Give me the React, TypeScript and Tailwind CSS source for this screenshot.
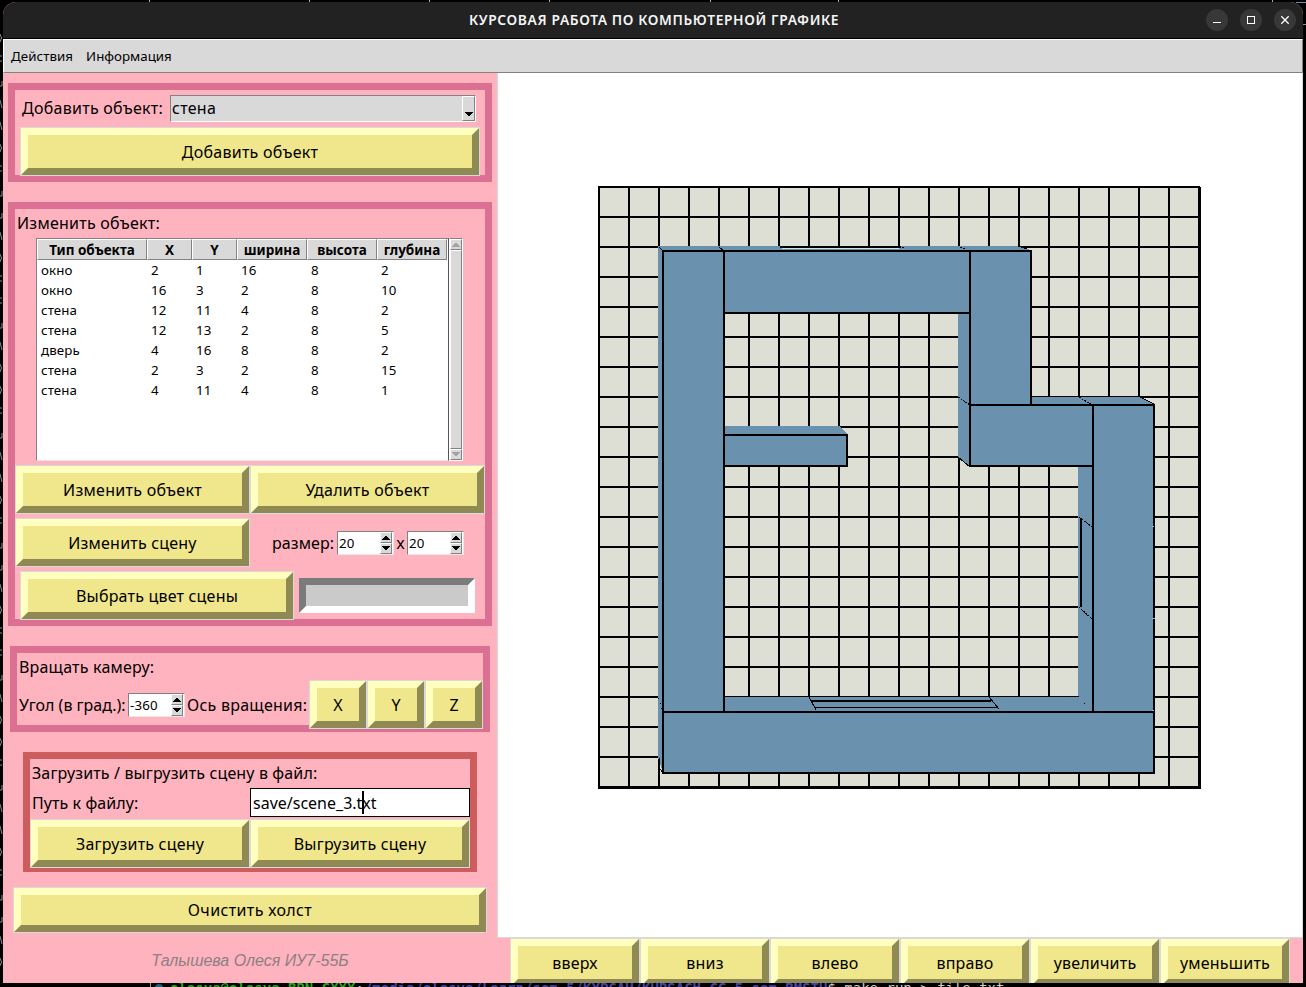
import React from "react";

const rows = [
  ["окно", "2", "1", "16", "8", "2"],
  ["окно", "16", "3", "2", "8", "10"],
  ["стена", "12", "11", "4", "8", "2"],
  ["стена", "12", "13", "2", "8", "5"],
  ["дверь", "4", "16", "8", "8", "2"],
  ["стена", "2", "3", "2", "8", "15"],
  ["стена", "4", "11", "4", "8", "1"],
];
const headers = ["Тип объекта", "X", "Y", "ширина", "высота", "глубина"];
const columns = "grid grid-cols-[110px_45px_45px_70px_70px_70px]";

function TkButton({ children, className }: { children: React.ReactNode; className: string }) {
  return (
    <button className={`shrink-0 bg-[#d9d9d9] p-px text-[16px] ${className}`}>
      <span className="flex h-full w-full items-center justify-center whitespace-nowrap border-[7px] border-t-[#ffffc0] border-l-[#ffffc0] border-r-[#8f8a54] border-b-[#8f8a54] bg-[#f0e68c]">
        {children}
      </span>
    </button>
  );
}

function Arrow({ up, muted }: { up?: boolean; muted?: boolean }) {
  return (
    <svg width="8" height="5" viewBox="0 0 8 5" shapeRendering="crispEdges">
      <path d={up ? "M4 0L8 5H0Z" : "M0 0H8L4 5Z"} fill={muted ? "#a3a3a3" : "#000"} />
    </svg>
  );
}

const raised = "border border-t-white border-l-white border-r-[#828282] border-b-[#828282] bg-[#d9d9d9]";

function Spin({ value }: { value: string }) {
  return (
    <div className="flex h-[24px] w-[57px] shrink-0 border border-t-[#828282] border-l-[#828282] border-r-[#e8e8e8] border-b-[#e8e8e8] bg-white">
      <span className="flex flex-1 items-center pt-[2px] pl-[1px] text-[13.3px] tracking-[0.15px]">{value}</span>
      <div className="flex w-[13px] flex-col">
        <span className={`flex h-[11px] w-[12px] items-center justify-center ${raised}`}><Arrow up /></span>
        <span className={`flex h-[11px] w-[12px] items-center justify-center ${raised}`}><Arrow /></span>
      </div>
    </div>
  );
}

const gridLines = Array.from({ length: 21 }, (_, i) => i * 30);

function GridLines() {
  return (
    <g stroke="#000" strokeWidth="2">
      {gridLines.map((p) => (
        <g key={p}>
          <line x1={599 + p} y1="186" x2={599 + p} y2="788" />
          <line x1="598" y1={187 + p} x2="1200" y2={187 + p} />
        </g>
      ))}
    </g>
  );
}

function Scene() {
  return (
    <svg className="block" width="804" height="864" viewBox="498 73 804 864" shapeRendering="crispEdges">
      <rect x="598" y="186" width="602" height="602" fill="#dddfd4" />
      <GridLines />
      <path d="M1200 187V789M598 788H1201" stroke="#000" strokeWidth="2" />
      <path d="M658 246H1018L1031 250V397H1140L1154 404V773H663L658 757Z" fill="#6a92af" />
      {/* Window slit in the top wall */}
      <rect x="780" y="246" width="121" height="2" fill="#000" />
      <rect x="782" y="248" width="117" height="1" fill="#dddfd4" />
      {/* Floor visible inside the walls */}
      <clipPath id="room">
        <path d="M725 314H958V457L970 467H1078V696H725Z" />
      </clipPath>
      <g clipPath="url(#room)">
        <rect x="725" y="314" width="353" height="382" fill="#dddfd4" />
        <GridLines />
      </g>
      <path d="M725 426H839L848 435V466H725Z" fill="#6a92af" />
      <g fill="none" stroke="#000" strokeWidth="2">
        <path d="M663 250V774M662 251H1032M724 251V713M724 313H971M970 251V467M1031 250V405M969 405H1155M969 466H1093M1093 405V713M1154 404V774M662 712H1155M662 773H1155" />
        <path d="M724 435H847V466H724" />
        <path d="M1081 518V607M811 701H991" />
      </g>
      <g fill="none" stroke="#000" strokeWidth="1">
        <path d="M725 696.5H1079M814 707.5H998M1032 396.5H1140" />
        <path d="M809 697L816 710M989 697L999 709M958 457L970 467M1140 397L1154 404M1018 246L1027 249M659 247L663 251M719 247L724 251M659.5 758V768L663 773" />
        <path d="M899 246L904 248M958 397L970 405M1079 397L1092 405M1079 517L1092 527M1079 607L1092 619M960 247L966 249" strokeDasharray="2 1" />
        <path d="M658.5 698L662.5 710" strokeDasharray="1 4" />
        <path d="M1084 703.5H1085" />
      </g>
      <path d="M1152 526.5H1154M1152 618.5H1155M1152 710.5H1154" stroke="#a5b5bd" />
    </svg>
  );
}

const specks = Array.from({ length: 43 }, (_, i) => i);

export default function App() {
  return (
    <div className="relative flex h-[987px] w-[1306px] flex-col overflow-hidden bg-black pt-[2px] font-['Noto_Sans',sans-serif] text-black">
      {/* Slivers of the terminal behind the window */}
      <svg className="absolute top-0 left-0" width="3" height="987" viewBox="0 0 3 987">
        {specks.map((i) => {
          const y = 34 + i * 22;
          const shapes = [`M0 ${y}Q3 ${y + 4} 0 ${y + 8}`, `M0 ${y}L2 ${y + 8}`, `M0 ${y + 8}H2V${y + 3}`, `M0 ${y}H2M0 ${y + 5}H2`];
          return <path key={i} d={shapes[(i * 7 + (i >> 2)) % 4]} stroke="#8d8d8d" fill="none" />;
        })}
      </svg>
      <div className="absolute top-0 left-0 flex h-[2px] w-full bg-black">
        <i className="ml-[149px] w-px bg-[#aaa]" />
        <i className="ml-[159px] w-px bg-[#aaa]" />
        <i className="ml-[119px] w-px bg-[#aaa]" />
        <i className="ml-[119px] w-px bg-[#aaa]" />
        <i className="ml-[160px] w-px bg-[#aaa]" />
        <i className="ml-[127px] w-px bg-[#aaa]" />
        <i className="ml-[433px] w-px bg-[#aaa]" />
      </div>
      <div className="absolute top-[2px] right-0 h-px w-[10px] bg-[#6d91b0]" />
      <div className="absolute top-[24px] right-0 h-px w-[3px] bg-[#8195a8]" />
      <main className="relative ml-[3px] flex h-[981px] w-[1300px] shrink-0 flex-col overflow-hidden rounded-t-[13px] bg-[#ffb3be]">
        <header className="flex h-[37px] shrink-0 items-center border-b border-black bg-[#222]">
          <h1 className="ml-[466px] w-[372px] whitespace-nowrap pt-px text-[13.8px] font-semibold tracking-[0.63px] text-[#f5f5f5]">
            КУРСОВАЯ РАБОТА ПО КОМПЬЮТЕРНОЙ ГРАФИКЕ
          </h1>
          <div className="ml-auto mr-[7px] flex gap-[12px]">
            <svg width="22" height="22" viewBox="0 0 22 22"><circle cx="11" cy="11" r="11" fill="#383838" /><path d="M7 13.5H15" stroke="#fff" /></svg>
            <svg width="22" height="22" viewBox="0 0 22 22"><circle cx="11" cy="11" r="11" fill="#383838" /><rect x="7.5" y="7.5" width="7" height="7" fill="none" stroke="#fff" /></svg>
            <svg width="22" height="22" viewBox="0 0 22 22"><circle cx="11" cy="11" r="11" fill="#383838" /><path d="M7.3 7.3L14.7 14.7M14.7 7.3L7.3 14.7" stroke="#fff" strokeWidth="1.3" /></svg>
          </div>
        </header>
        <nav className="flex h-[34px] shrink-0 items-center gap-[13px] border border-t-white border-l-white border-r-[#828282] border-b-[#828282] bg-[#d9d9d9] pt-[2px] pl-[7px] text-[13.3px]">
          <span className="tracking-[0.08px]">Действия</span>
          <span>Информация</span>
        </nav>
        <div className="flex min-h-0 flex-1">
          <aside className="flex w-[494px] shrink-0 flex-col text-[16px]">
            <section className="mt-[10px] ml-[5px] h-[99px] w-[484px] shrink-0 border-[7px] border-[#db7093]">
              <div className="flex h-[37px] items-center pl-[7px]">
                <label className="w-[148px] whitespace-nowrap pb-[2px] tracking-[0.27px]">Добавить объект:</label>
                <div className="-mt-px flex h-[27px] w-[306px] border border-t-[#828282] border-l-[#828282] border-r-white border-b-white bg-[#d9d9d9]">
                  <span className="flex flex-1 items-center pl-[1px] tracking-[0.27px]">стена</span>
                  <span className={`flex w-[13px] items-end justify-center pb-[3px] ${raised}`}><Arrow /></span>
                </div>
              </div>
              <TkButton className="ml-[5px] block h-[49px] w-[460px] tracking-[0.27px]">Добавить объект</TkButton>
            </section>

            <section className="mt-[20px] ml-[5px] h-[424px] w-[484px] shrink-0 border-[7px] border-[#db7093]">
              <h2 className="flex h-[29px] items-center pb-[2px] pl-[2px] tracking-[0.25px]">Изменить объект:</h2>
              <div className="ml-[21px] flex h-[223px] w-[427px]">
                <div className="w-[413px] border border-t-[#828282] border-l-[#828282] border-r-[#555] border-b-[#e8e8e8] bg-white">
                  <div className={`h-[21px] text-[13.5px] font-bold ${columns}`}>
                    {headers.map((h) => (
                      <div key={h} className={`flex h-[21px] items-center justify-center whitespace-nowrap pt-px ${raised}`}>{h}</div>
                    ))}
                  </div>
                  {rows.map((r, i) => (
                    <div key={i} className={`h-[20px] text-[13.3px] leading-[20px] tracking-[0.1px] ${columns}`}>
                      {r.map((c, j) => <span key={j} className="pl-[4px]">{c}</span>)}
                    </div>
                  ))}
                </div>
                <div className="flex w-[14px] flex-col border border-t-[#828282] border-l-white border-r-white border-b-white bg-[#c3c3c3]">
                  <span className={`flex h-[11px] items-center justify-center ${raised}`}><Arrow up muted /></span>
                  <span className={`flex-1 ${raised}`} />
                  <span className={`flex h-[11px] items-center justify-center ${raised}`}><Arrow muted /></span>
                </div>
              </div>
              <div className="mt-[4px] flex">
                <TkButton className="h-[49px] w-[235px] tracking-[0.27px]">Изменить объект</TkButton>
                <TkButton className="h-[49px] w-[235px] tracking-[0.27px]">Удалить объект</TkButton>
              </div>
              <div className="mt-[4px] flex h-[49px] items-center">
                <TkButton className="h-[49px] w-[235px] tracking-[0.2px]">Изменить сцену</TkButton>
                <span className="ml-[22px] w-[65px] shrink-0 whitespace-nowrap tracking-[0.1px]">размер:</span>
                <Spin value="20" />
                <span className="w-[13px] shrink-0 text-center">x</span>
                <Spin value="20" />
              </div>
              <div className="mt-[4px] ml-[5px] flex h-[49px] items-center">
                <TkButton className="h-[49px] w-[274px] tracking-[0.2px]">Выбрать цвет сцены</TkButton>
                <div className="ml-[5px] h-[35px] w-[176px] border-[7px] border-t-[#7b7b7b] border-l-[#7b7b7b] border-r-white border-b-white bg-[#cacaca]" />
              </div>
            </section>

            <section className="mt-[20px] ml-[7px] h-[86px] w-[480px] shrink-0 border-[7px] border-[#db7093]">
              <h2 className="flex h-[27px] items-center pl-[2px] tracking-[0.2px]">Вращать камеру:</h2>
              <div className="flex h-[49px] items-center pl-[2px]">
                <span className="w-[109px] shrink-0 whitespace-nowrap">Угол (в град.):</span>
                <Spin value="-360" />
                <span className="ml-[2px] w-[122px] shrink-0 whitespace-nowrap tracking-[0.25px]">Ось вращения:</span>
                <TkButton className="h-[49px] w-[58px]">X</TkButton>
                <TkButton className="h-[49px] w-[58px]">Y</TkButton>
                <TkButton className="h-[49px] w-[58px]">Z</TkButton>
              </div>
            </section>

            <section className="mt-[20px] ml-[20px] h-[120px] w-[454px] shrink-0 border-[7px] border-[#cd5c5c]">
              <h2 className="flex h-[29px] items-center pb-[2px] pl-[2px] tracking-[0.14px]">Загрузить / выгрузить сцену в файл:</h2>
              <div className="flex h-[29px] items-center pl-[2px]">
                <label className="w-[218px] tracking-[0.08px]">Путь к файлу:</label>
                <div className="flex h-[29px] w-[220px] items-center border border-black bg-white pl-[2px]">
                  <span>save/scene_3.</span>
                  <span className="relative">
                    txt
                    <i className="absolute top-0 left-[5px] h-[23px] w-[2px] bg-black" />
                  </span>
                </div>
              </div>
              <div className="mt-[2px] flex">
                <TkButton className="h-[49px] w-[220px] tracking-[0.2px]">Загрузить сцену</TkButton>
                <TkButton className="h-[49px] w-[220px] tracking-[0.2px]">Выгрузить сцену</TkButton>
              </div>
            </section>

            <TkButton className="mt-[15px] ml-[10px] h-[46px] w-[474px] tracking-[0.37px]">Очистить холст</TkButton>
            <footer className="mt-[16px] text-center font-['Liberation_Sans',sans-serif] text-[16px] italic leading-[24px] text-[#8b8085]">
              Талышева Олеся ИУ7-55Б
            </footer>
          </aside>

          <div className="flex min-w-0 flex-1 flex-col overflow-hidden">
            <div className="h-[865px] w-[806px] shrink-0 border-r border-b border-l border-[#d9d9d9] bg-white">
              <Scene />
            </div>
            <div className="flex shrink-0 pl-[13px]">
              {["вверх", "вниз", "влево", "вправо", "увеличить", "уменьшить"].map((t) => (
                <TkButton key={t} className="h-[49px] w-[130px] tracking-[0.2px]">{t}</TkButton>
              ))}
            </div>
          </div>
        </div>
      </main>
      <div className="relative ml-[150px] flex h-[4px] shrink-0 overflow-hidden whitespace-pre font-['DejaVu_Sans_Mono',monospace] text-[14px] leading-[16px]">
        <i className="mr-[4px] w-px shrink-0 bg-[#999]" />
        <i className="mt-px mr-[7px] h-[9px] w-[8px] shrink-0 rounded-full bg-[#1b6478]" />
        <div className="-mt-[3px]">
          <span className="font-bold text-[#26a51e]">olesya@olesya-BRN-GXXX</span>
          <span className="text-[#ccc]">:</span>
          <span className="font-bold text-[#4545a8]">/media/olesya/Learn/sem_5/КУРСАЧ/KURSACH_CG_5_sem_BMSTU</span>
          <span className="text-[#ccc]">$ make run &gt; file.txt</span>
        </div>
      </div>
    </div>
  );
}
